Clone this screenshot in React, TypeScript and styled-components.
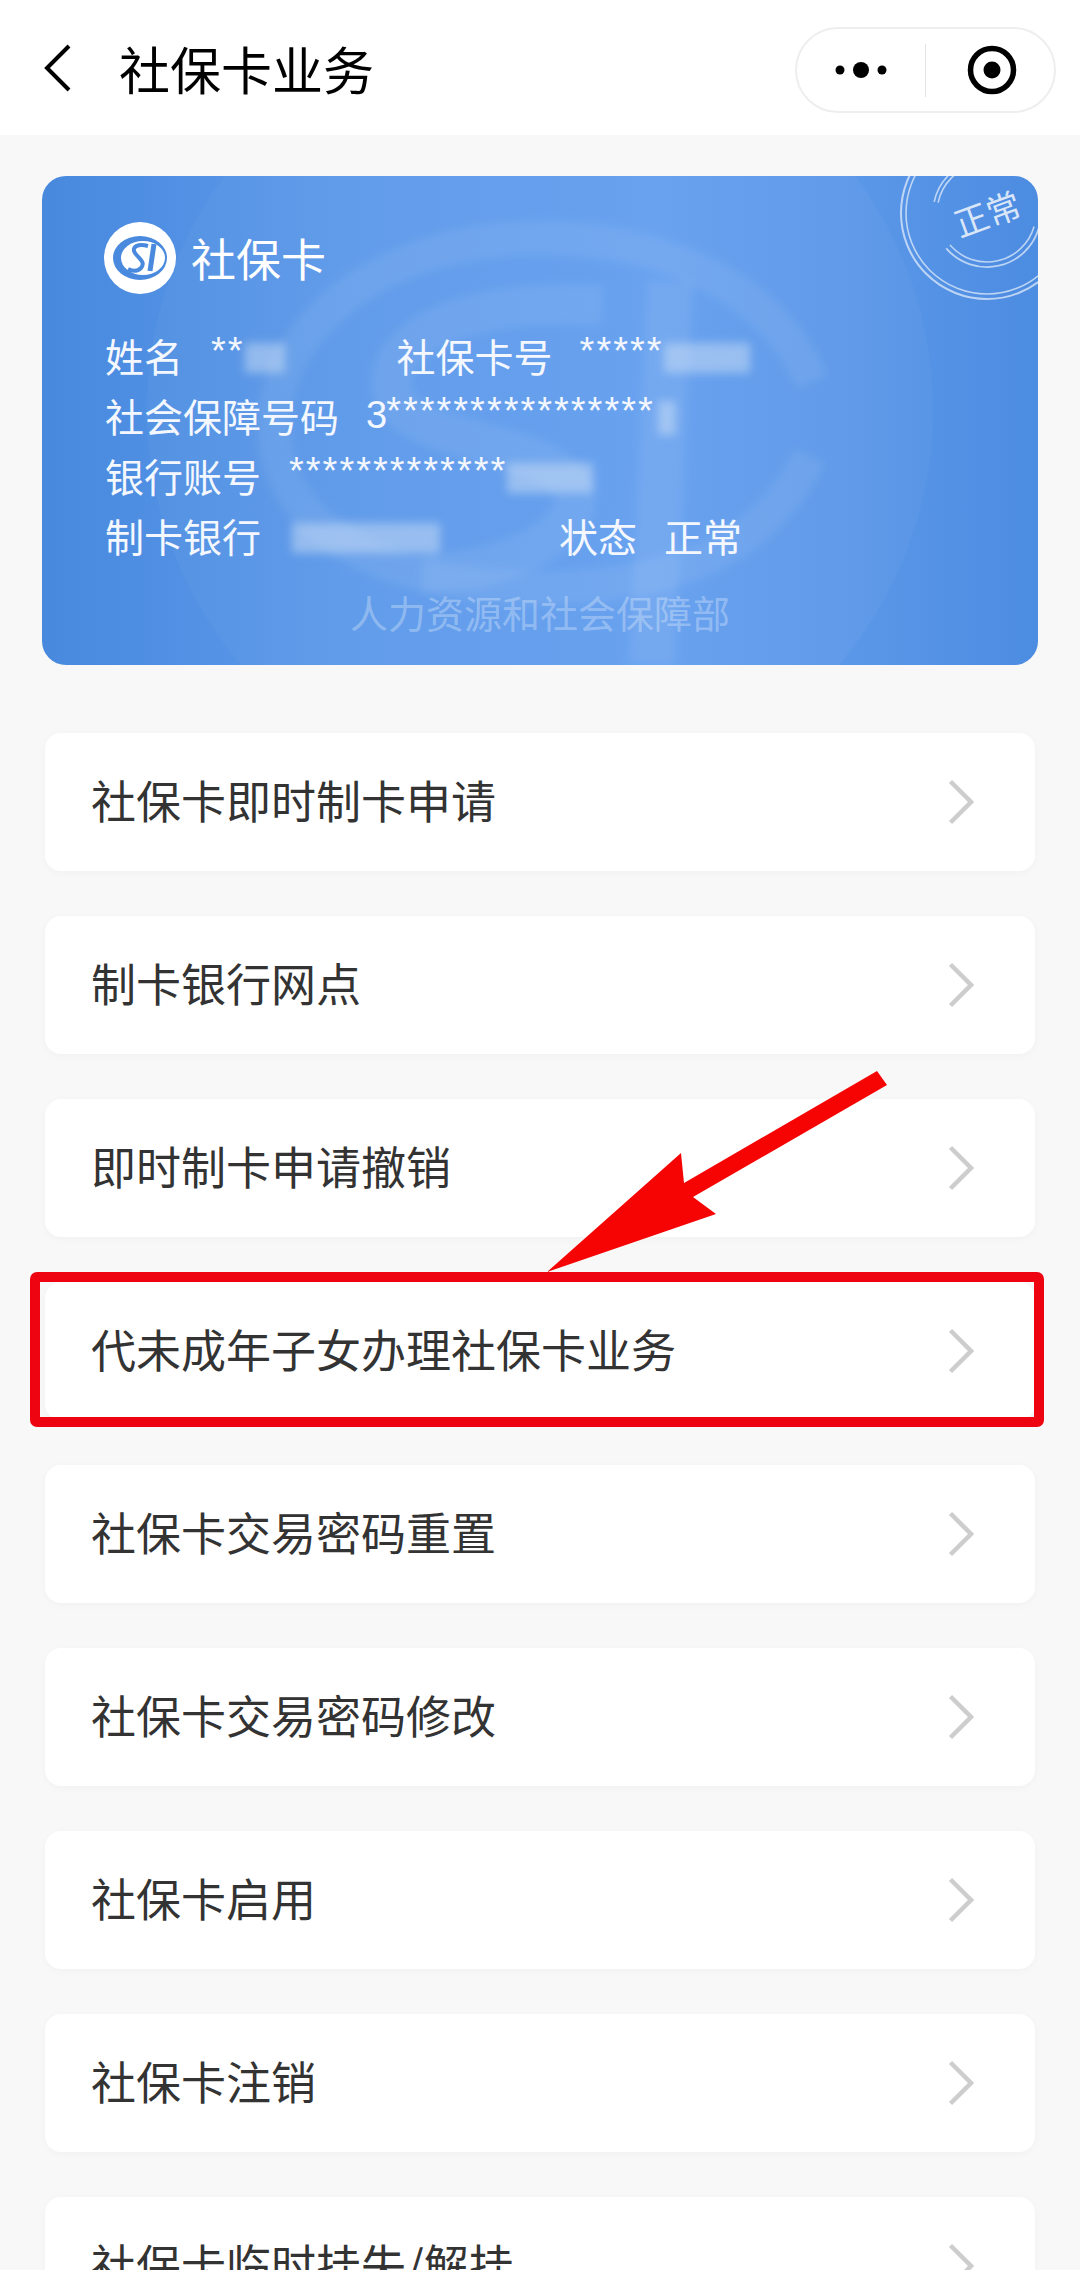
import React from "react";
import styled, { createGlobalStyle } from "styled-components";

const FONT = `"Noto Sans CJK SC", "Noto Sans", "Liberation Sans", sans-serif`;

const Global = createGlobalStyle`
  html, body { margin: 0; padding: 0; background: #f8f8f8; }
  body { font-family: ${FONT}; }
  * { box-sizing: border-box; }
`;

const Screen = styled.div`
  position: relative;
  width: 1080px;
  height: 2270px;
  overflow: hidden;
  background: #f8f8f8;
`;

const NavBar = styled.header`
  height: 135px;
  background: #fff;
  display: flex;
  align-items: center;
  padding: 0 24px 0 44px;
`;

const BackIcon = styled.svg`
  width: 27px;
  height: 50px;
  flex: none;
`;

const NavTitle = styled.h1`
  margin: 0 0 0 48px;
  font-size: 51px;
  line-height: 60px;
  font-weight: 400;
  color: #000;
  flex: 1;
`;

const Capsule = styled.div`
  width: 261px;
  height: 86px;
  border: 2px solid #eee;
  border-radius: 43px;
  display: flex;
  align-items: center;
  background: #fff;
  margin-top: 5px;
`;

const CapsuleCell = styled.div<{ $w: number; $shift?: number }>`
  flex: none;
  width: ${(p) => p.$w}px;
  height: 100%;
  display: flex;
  align-items: center;
  justify-content: center;
  padding-left: ${(p) => p.$shift ?? 0}px;
`;

const CapsuleDivider = styled.div`
  flex: none;
  width: 1px;
  height: 53px;
  background: #e4e4e4;
`;

const Content = styled.main`
  padding: 41px 42px 0;
`;

const Card = styled.section`
  position: relative;
  height: 489px;
  border-radius: 24px;
  overflow: hidden;
  padding: 46px 62px 0;
  color: #fff;
  background: linear-gradient(90deg, #4889de 0%, #5c99ea 30%, #659fef 62%, #5c98e9 80%, #4c8ce1 100%);
`;

const CardArt = styled.svg`
  position: absolute;
  inset: 0;
  width: 100%;
  height: 100%;
`;

const StampText = styled.span`
  position: absolute;
  left: 945px;
  top: 37px;
  transform: translate(-50%, -50%) rotate(-20deg);
  font-size: 34px;
  line-height: 40px;
  color: rgba(255, 255, 255, 0.78);
  white-space: nowrap;
`;

const CardHead = styled.div`
  position: relative;
  display: flex;
  align-items: center;
  height: 72px;
  margin-bottom: 31px;
`;

const CardTitle = styled.span`
  margin-left: 15px;
  font-size: 45px;
  line-height: 60px;
`;

const InfoLine = styled.div`
  position: relative;
  display: flex;
  align-items: center;
  height: 60px;
  margin-left: 1px;
  font-size: 39px;
  line-height: 60px;
  white-space: nowrap;
`;

const InfoLabel = styled.span<{ $left?: number }>`
  margin-left: ${(p) => p.$left ?? 0}px;
  color: #f4f8fe;
`;

const Stars = styled.span<{ $left: number }>`
  margin-left: ${(p) => p.$left}px;
  font-family: "Liberation Sans", sans-serif;
  font-size: 38px;
  letter-spacing: 2px;
  color: #f4f8fe;
  position: relative;
  top: -4px;
`;

const LeadDigit = styled.span`
  font-family: "Liberation Sans", sans-serif;
  font-size: 38px;
  letter-spacing: 0;
  position: relative;
  top: 4px;
  margin-right: -1px;
`;

const Masked = styled.span<{ $w: number; $left?: number; $h?: number }>`
  display: inline-block;
  width: ${(p) => p.$w}px;
  height: ${(p) => p.$h ?? 30}px;
  margin-left: ${(p) => p.$left ?? 0}px;
  background: rgba(226, 236, 248, 0.42);
  filter: blur(5px);
  position: relative;
  top: 3px;
`;

const CardFooter = styled.div`
  position: relative;
  margin-top: 22px;
  text-align: center;
  font-size: 38px;
  line-height: 50px;
  color: rgba(255, 255, 255, 0.3);
`;

const RowList = styled.div`
  display: flex;
  flex-direction: column;
  gap: 45px;
  margin: 68px 3px 0;
`;

const Row = styled.div<{ $marked?: boolean }>`
  position: relative;
  flex: none;
  height: 138px;
  border-radius: 16px;
  background: #fff;
  box-shadow: 0 2px 8px rgba(0, 0, 0, 0.03);
  display: flex;
  align-items: center;
  justify-content: space-between;
  padding: 0 61px 0 46px;

  ${(p) =>
    p.$marked &&
    `&::after {
      content: "";
      position: absolute;
      left: -15px;
      right: -9px;
      top: -10px;
      bottom: -7px;
      border: 10px solid #ee0410;
      border-radius: 7px;
      pointer-events: none;
    }`}
`;

const RowText = styled.span`
  font-size: 45px;
  line-height: 60px;
  color: #333;
  margin-top: -4px;
`;

const Chevron = styled.svg`
  width: 26px;
  height: 46px;
  flex: none;
`;

const ArrowLayer = styled.svg`
  position: absolute;
  left: 0;
  top: 0;
  width: 1080px;
  height: 2270px;
  pointer-events: none;
`;

const rowsData = [
  "社保卡即时制卡申请",
  "制卡银行网点",
  "即时制卡申请撤销",
  "代未成年子女办理社保卡业务",
  "社保卡交易密码重置",
  "社保卡交易密码修改",
  "社保卡启用",
  "社保卡注销",
  "社保卡临时挂失/解挂",
];

const arc = (r: number, a0: number, a1: number) => {
  const cx = 945;
  const cy = 37;
  const p = (a: number) => {
    const t = (a * Math.PI) / 180;
    return `${(cx + r * Math.cos(t)).toFixed(1)} ${(cy + r * Math.sin(t)).toFixed(1)}`;
  };
  return `M${p(a0)} A${r} ${r} 0 ${a1 - a0 > 180 ? 1 : 0} 1 ${p(a1)}`;
};

const ChevronIcon = () => (
  <Chevron viewBox="0 0 26 46">
    <path d="M2.5 2.5 L23 23 L2.5 43.5" fill="none" stroke="#cdcdcd" strokeWidth="4.5" />
  </Chevron>
);

const Logo = () => (
  <svg width="72" height="72" viewBox="0 0 72 72" style={{ flex: "none" }}>
    <circle cx="36" cy="36" r="36" fill="#fff" />
    <ellipse cx="36" cy="36" rx="27" ry="22" fill="#4a8ade" />
    <ellipse cx="39" cy="36" rx="22" ry="17" fill="#fff" />
    <path d="M44 24 C34 21 27 25 31 31 C35 37 42 40 37 46 C33 50 27 49 24 47" fill="none" stroke="#4a8ade" strokeWidth="4" />
    <path d="M50 22 L46 49" fill="none" stroke="#4a8ade" strokeWidth="5" />
  </svg>
);

export default function App() {
  return (
    <Screen>
      <Global />
      <NavBar>
        <BackIcon viewBox="0 0 27 50">
          <path d="M25 3 L3 25 L25 47" fill="none" stroke="#000" strokeWidth="4" />
        </BackIcon>
        <NavTitle>社保卡业务</NavTitle>
        <Capsule>
          <CapsuleCell $w={128}>
            <svg width="60" height="20" viewBox="0 0 60 20">
              <circle cx="9" cy="10" r="4.5" fill="#000" />
              <circle cx="30" cy="10" r="8" fill="#000" />
              <circle cx="51" cy="10" r="4.5" fill="#000" />
            </svg>
          </CapsuleCell>
          <CapsuleDivider />
          <CapsuleCell $w={128} $shift={3}>
            <svg width="50" height="50" viewBox="0 0 50 50">
              <circle cx="25" cy="25" r="21.5" fill="none" stroke="#000" strokeWidth="5.5" />
              <circle cx="25" cy="25" r="8.5" fill="#000" />
            </svg>
          </CapsuleCell>
        </Capsule>
      </NavBar>

      <Content>
        <Card>
          <CardArt viewBox="0 0 996 489">
            <defs>
              <filter id="soft">
                <feGaussianBlur stdDeviation="4" />
              </filter>
            </defs>
            <circle cx="498" cy="234" r="393" fill="rgba(255,255,255,0.03)" />
            <g filter="url(#soft)" fill="none" stroke="rgba(255,255,255,0.075)">
              <path d="M770 206 C730 110 620 62 498 62 C340 62 232 150 232 250 C232 340 320 410 498 412 C620 412 720 380 768 280" strokeWidth="34" />
              <path d="M560 130 C430 120 340 160 350 215 C360 270 500 260 530 310 C550 350 470 400 380 396" strokeWidth="40" />
              <path d="M628 105 L610 489" strokeWidth="46" />
            </g>
            <g fill="none" stroke="rgba(255,255,255,0.62)">
              <circle cx="945" cy="37" r="86" strokeWidth="2" />
              <circle cx="945" cy="37" r="81" strokeWidth="1.6" />
              <path d={arc(54, 192, 258)} strokeWidth="1.6" />
              <path d={arc(50, 192, 258)} strokeWidth="1.6" />
              <path d={arc(54, 16, 139)} strokeWidth="1.8" />
              <path d={arc(49, 16, 139)} strokeWidth="1.6" />
            </g>
          </CardArt>
          <StampText>正常</StampText>

          <CardHead>
            <Logo />
            <CardTitle>社保卡</CardTitle>
          </CardHead>

          <InfoLine>
            <InfoLabel>姓名</InfoLabel>
            <Stars $left={28}>**</Stars>
            <Masked $w={40} />
            <InfoLabel $left={112}>社保卡号</InfoLabel>
            <Stars $left={27}>*****</Stars>
            <Masked $w={86} />
          </InfoLine>
          <InfoLine>
            <InfoLabel>社会保障号码</InfoLabel>
            <Stars $left={27}>
              <LeadDigit>3</LeadDigit>****************
            </Stars>
            <Masked $w={18} $left={3} $h={34} />
          </InfoLine>
          <InfoLine>
            <InfoLabel>银行账号</InfoLabel>
            <Stars $left={28}>*************</Stars>
            <Masked $w={86} />
          </InfoLine>
          <InfoLine>
            <InfoLabel>制卡银行</InfoLabel>
            <Masked $w={148} $left={31} />
            <InfoLabel $left={119}>状态</InfoLabel>
            <InfoLabel $left={27}>正常</InfoLabel>
          </InfoLine>

          <CardFooter>人力资源和社会保障部</CardFooter>
        </Card>

        <RowList>
          {rowsData.map((t, i) => (
            <Row key={t} $marked={i === 3}>
              <RowText>{t}</RowText>
              <ChevronIcon />
            </Row>
          ))}
        </RowList>
      </Content>

      <ArrowLayer viewBox="0 0 1080 2270">
        <polygon
          points="877,1071 887,1085 693,1197 716,1214 547,1272 681,1153 684,1183"
          fill="#f60404"
        />
      </ArrowLayer>
    </Screen>
  );
}
